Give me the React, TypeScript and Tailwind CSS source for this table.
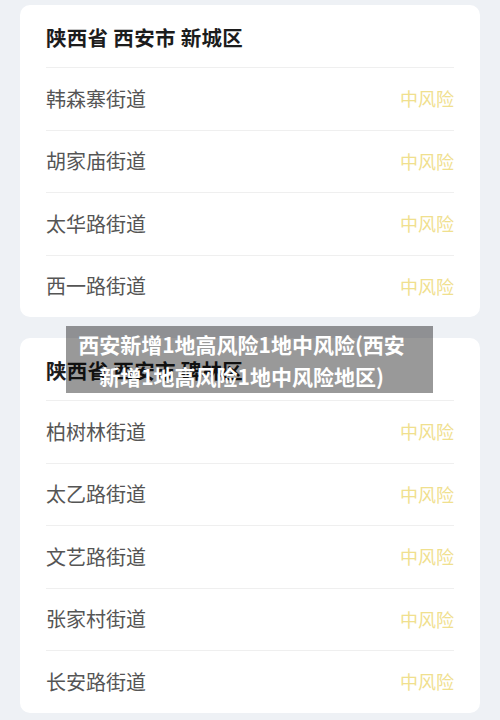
const groups = [
  {
    title: "陕西省 西安市 新城区",
    streets: ["韩森寨街道", "胡家庙街道", "太华路街道", "西一路街道"],
  },
  {
    title: "陕西省 西安市 碑林区",
    streets: ["柏树林街道", "太乙路街道", "文艺路街道", "张家村街道", "长安路街道"],
  },
];

const RiskCard = ({ title, streets }: { title: string; streets: string[] }) => (
  <div className="bg-white rounded-[10px] px-[26px]">
    <div className="h-[62px] pt-[2px] flex items-center text-[20.5px] tracking-[0.3px] font-bold text-[#1c1c1c]">{title}</div>
    {streets.map((s) => (
      <div key={s} className="h-[62.5px] border-t border-[#efefef] flex items-center justify-between">
        <span className="text-[20px] text-[#555]">{s}</span>
        <span className="text-[18px] text-[#f0e08e]">中风险</span>
      </div>
    ))}
  </div>
);

export default function App() {
  return (
    <div
      className="relative w-[500px] h-[720px] overflow-hidden bg-[#eef1f5] px-[20px] pt-[5px] flex flex-col gap-[21px]"
      style={{ fontFamily: '"Noto Sans CJK SC", "Noto Sans", sans-serif' }}
    >
      {groups.map((g) => (
        <RiskCard key={g.title} {...g} />
      ))}
      {/* title overlay */}
      <div className="absolute left-[66px] top-[326px] w-[367px] h-[67px] bg-black/40 pr-[16px] flex items-center justify-center text-center text-white font-bold text-[21px] leading-[32px]">
        <p>
          西安新增1地高风险1地中风险(西安
          <br />
          新增1地高风险1地中风险地区)
        </p>
      </div>
    </div>
  );
}
